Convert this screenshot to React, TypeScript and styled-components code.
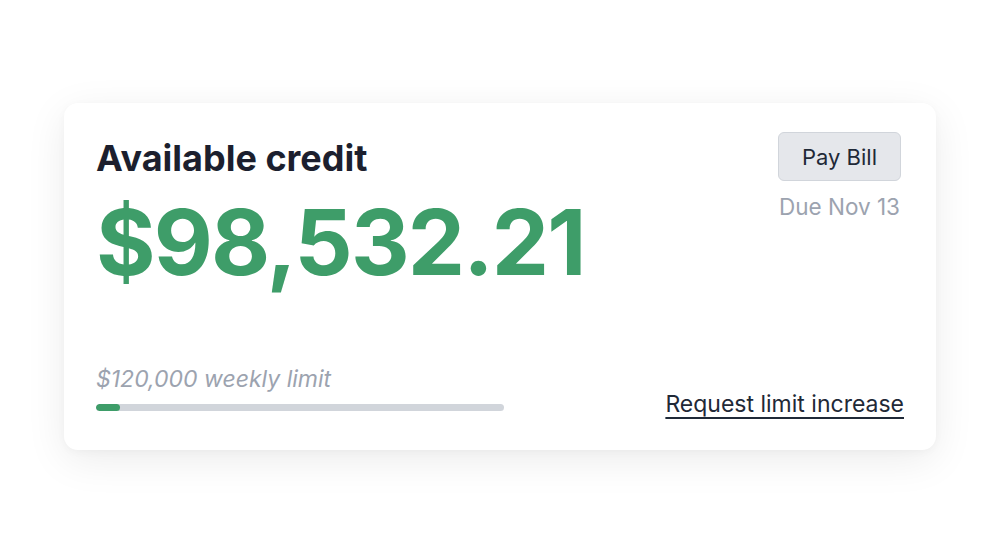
import styled, { createGlobalStyle } from "styled-components";

const GlobalStyle = createGlobalStyle`
  html, body {
    margin: 0;
    padding: 0;
    background: #ffffff;
    font-family: Inter, "Noto Sans", sans-serif;
  }
`;

const Page = styled.div`
  width: 1000px;
  height: 554px;
  padding: 103px 64px 0;
  box-sizing: border-box;
`;

const Card = styled.div`
  height: 347px;
  box-sizing: border-box;
  background: #ffffff;
  border-radius: 14px;
  box-shadow: 0 10px 40px rgba(0, 0, 0, 0.08), 0 2px 8px rgba(0, 0, 0, 0.03);
  padding: 29px 32px 32px;
  display: flex;
  flex-direction: column;
  justify-content: space-between;
`;

const TopRow = styled.div`
  display: flex;
  justify-content: space-between;
  align-items: flex-start;
`;

const Title = styled.h2`
  margin: 0;
  font-size: 36px;
  font-weight: 700;
  color: #1c1f2e;
  line-height: 52px;
`;

const Amount = styled.div`
  font-size: 91px;
  font-weight: 700;
  letter-spacing: -0.02em;
  color: #3e9d69;
  line-height: 1;
  margin-top: 13px;
`;

const BillBox = styled.div`
  display: flex;
  flex-direction: column;
  align-items: flex-end;
  gap: 12px;
`;

const PayButton = styled.button`
  height: 49px;
  width: 123px;
  padding: 0;
  font-family: inherit;
  font-size: 22px;
  color: #1f2937;
  background: #e5e7eb;
  border: 1.5px solid #d1d5db;
  border-radius: 6px;
  margin-right: 3px;
`;

const Due = styled.div`
  font-size: 22.5px;
  color: #9ca3af;
  margin-right: 4px;
`;

const BottomRow = styled.div`
  display: flex;
  justify-content: space-between;
  align-items: flex-end;
`;

const LimitBox = styled.div`
  display: flex;
  flex-direction: column;
  gap: 11px;
`;

const LimitText = styled.div`
  font-size: 23px;
  font-style: italic;
  color: #9ca3af;
`;

const Track = styled.div`
  width: 408px;
  height: 7px;
  border-radius: 4px;
  background: #d1d5db;
  overflow: hidden;
  margin-bottom: 7px;
`;

const Fill = styled.div`
  height: 100%;
  background: #3e9d69;
  border-radius: 4px;
`;

const RequestLink = styled.a`
  font-size: 23px;
  color: #1f2937;
  text-decoration: underline;
  text-underline-offset: 5px;
  text-decoration-thickness: 1.5px;
  cursor: pointer;
`;

const limit = 120000;
const used = 7000;

export default function App() {
  return (
    <>
      <GlobalStyle />
      <Page>
        <Card>
          <TopRow>
            <div>
              <Title>Available credit</Title>
              <Amount>$98,532.21</Amount>
            </div>
            <BillBox>
              <PayButton>Pay Bill</PayButton>
              <Due>Due Nov 13</Due>
            </BillBox>
          </TopRow>
          <BottomRow>
            <LimitBox>
              <LimitText>$120,000 weekly limit</LimitText>
              <Track>
                <Fill style={{ width: `${(used / limit) * 100}%` }} />
              </Track>
            </LimitBox>
            <RequestLink>Request limit increase</RequestLink>
          </BottomRow>
        </Card>
      </Page>
    </>
  );
}
